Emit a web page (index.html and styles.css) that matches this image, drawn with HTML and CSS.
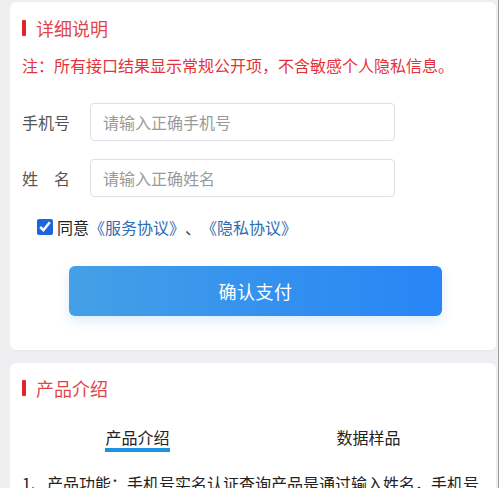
FILE: index.html
```html
<!DOCTYPE html>
<html lang="zh-CN">
<head>
<meta charset="utf-8">
<title>详细说明</title>
<link rel="stylesheet" href="styles.css">
</head>
<body>
<div class="page">
  <section class="card card-form">
    <h2 class="card-title"><span class="bar"></span>详细说明</h2>
    <p class="note">注：所有接口结果显示常规公开项，不含敏感个人隐私信息。</p>
    <div class="row row-phone">
      <label class="label">手机号</label>
      <input class="input" type="text" placeholder="请输入正确手机号">
    </div>
    <div class="row row-name">
      <label class="label">姓&emsp;名</label>
      <input class="input" type="text" placeholder="请输入正确姓名">
    </div>
    <div class="agree">
      <input class="check" type="checkbox" checked>
      <span class="agree-text">同意</span><a class="link">《服务协议》</a><span class="sep">、</span><a class="link">《隐私协议》</a>
    </div>
    <button class="pay">确认支付</button>
  </section>

  <section class="card card-intro">
    <h2 class="card-title"><span class="bar"></span>产品介绍</h2>
    <div class="tabs">
      <div class="tab active"><span class="tab-text">产品介绍</span></div>
      <div class="tab"><span class="tab-text">数据样品</span></div>
    </div>
    <p class="desc">1、产品功能：手机号实名认证查询产品是通过输入姓名，手机号码，核验二者是否一致，返回核验结果。</p>
  </section>
</div>
</body>
</html>
```

FILE: styles.css
```css
* { box-sizing: border-box; }
html, body {
  margin: 0;
  padding: 0;
  height: 100%;
  overflow: hidden;
}
body {
  background: #efeff1;
  font-family: "Noto Sans CJK SC", "Noto Sans", sans-serif;
  color: #222;
}
.page {
  padding: 2px 2px 0 10px;
  display: flex;
  flex-direction: column;
  gap: 13px;
  border-right: 1px solid #9a9a9e;
  width: 499px;
  min-height: 488px;
}
.card {
  background: #fff;
  border-radius: 6px;
  padding: 0 12px;
  box-shadow: 0 1px 2px rgba(0,0,0,0.03);
}
.card-form {
  padding-top: 14px;
  padding-bottom: 34px;
}
.card-intro {
  padding-top: 13px;
  flex: 1;
}
.card-title {
  margin: 0;
  display: flex;
  align-items: center;
  gap: 10px;
  font-size: 18px;
  font-weight: 400;
  line-height: 24px;
  height: 24px;
  color: #e0474b;
}
.bar {
  width: 4px;
  height: 16px;
  background: #e02428;
  border-radius: 1px;
}
.note {
  margin: 14px 0 0;
  font-size: 16px;
  line-height: 22px;
  color: #e5323a;
  white-space: nowrap;
  font-weight: 400;
}
.row {
  display: flex;
  align-items: center;
}
.row-phone { margin-top: 27px; }
.row-name { margin-top: 18px; }
.label {
  width: 68px;
  font-size: 16px;
  color: #555;
  line-height: 22px;
}
.input {
  width: 305px;
  height: 38px;
  border: 1px solid #dcdfe6;
  border-radius: 4px;
  padding: 0 12px;
  font-family: inherit;
  font-size: 16px;
  color: #333;
  background: #fff;
  outline: none;
}
.input::placeholder { color: #9a9a9a; }
.agree {
  margin-top: 19px;
  padding-left: 15px;
  display: flex;
  align-items: center;
  font-size: 16px;
  line-height: 22px;
}
.check {
  width: 16px;
  height: 16px;
  margin: 0 4px 0 0;
  accent-color: #1b66dc;
}
.agree-text { color: #222; }
.link { color: #2d6db5; text-decoration: none; }
.sep { color: #444; }
.pay {
  display: block;
  margin: 28px 0 0 47px;
  width: 373px;
  height: 50px;
  border: none;
  border-radius: 6px;
  background: linear-gradient(90deg, #45a0e6 0%, #3592ee 50%, #2785f6 100%);
  color: #fff;
  font-family: inherit;
  font-size: 18px;
  letter-spacing: 0.5px;
  box-shadow: 0 5px 12px rgba(60, 150, 240, 0.18);
}
.tabs {
  margin-top: 26px;
  display: flex;
}
.tab {
  flex: 1;
  display: flex;
  justify-content: center;
}
.tab-text {
  font-size: 16px;
  line-height: 22px;
  color: #222;
  border-bottom: 4px solid transparent;
}
.tab.active .tab-text { border-bottom-color: #1e91e3; }
.desc {
  margin: 17px 0 0;
  font-size: 16px;
  line-height: 28px;
  color: #222;
}
```
